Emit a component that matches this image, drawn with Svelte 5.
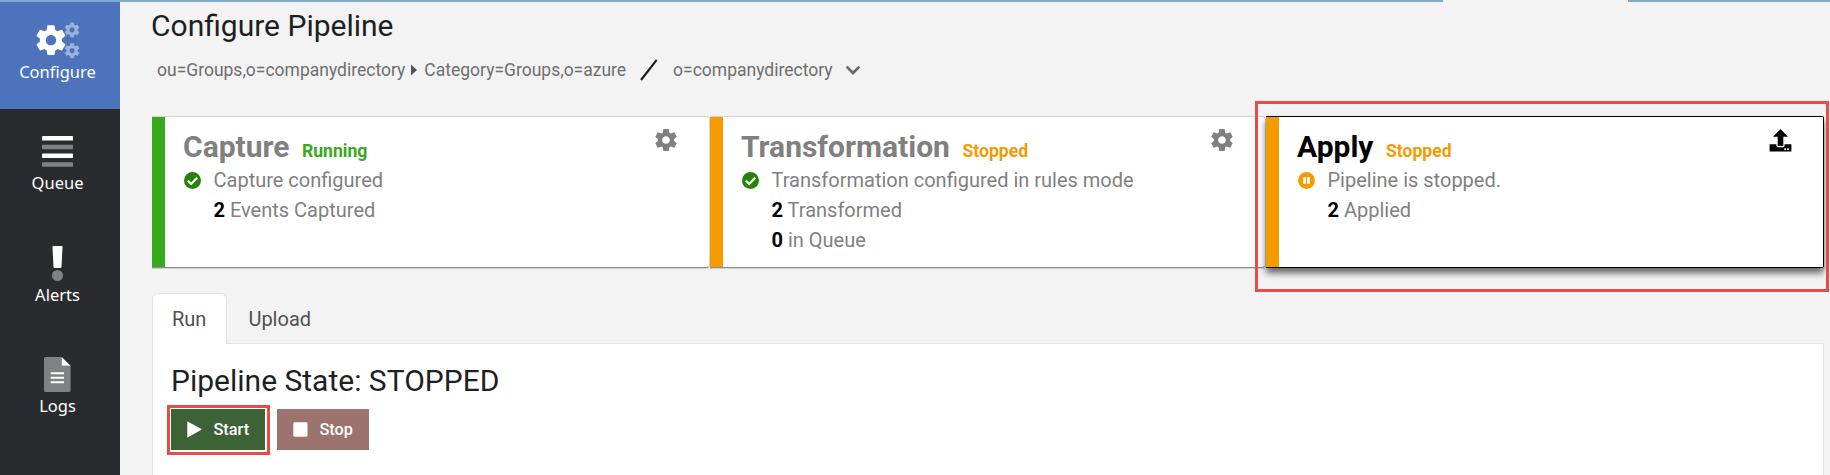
<script>
  const nav = [
    { id: 'configure', label: 'Configure', active: true },
    { id: 'queue', label: 'Queue' },
    { id: 'alerts', label: 'Alerts' },
    { id: 'logs', label: 'Logs' }
  ];
  const stages = [
    { name: 'Capture', status: 'Running', tone: 'green', icon: 'check', message: 'Capture configured', counts: [[2, 'Events Captured']] },
    { name: 'Transformation', status: 'Stopped', tone: 'orange', icon: 'check', message: 'Transformation configured in rules mode', counts: [[2, 'Transformed'], [0, 'in Queue']] },
    { name: 'Apply', status: 'Stopped', tone: 'orange', icon: 'pause', message: 'Pipeline is stopped.', counts: [[2, 'Applied']], selected: true }
  ];
  const gear = 'M19.43 12.98c.04-.32.07-.64.07-.98s-.03-.66-.07-.98l2.11-1.65c.19-.15.24-.42.12-.64l-2-3.46c-.12-.22-.39-.3-.61-.22l-2.49 1c-.52-.4-1.08-.73-1.69-.98l-.38-2.65C14.46 2.18 14.25 2 14 2h-4c-.25 0-.46.18-.49.42l-.38 2.65c-.61.25-1.17.59-1.69.98l-2.49-1c-.23-.09-.49 0-.61.22l-2 3.46c-.13.22-.07.49.12.64l2.11 1.65c-.04.32-.07.65-.07.98s.03.66.07.98l-2.11 1.65c-.19.15-.24.42-.12.64l2 3.46c.12.22.39.3.61.22l2.49-1c.52.4 1.08.73 1.69.98l.38 2.65c.03.24.24.42.49.42h4c.25 0 .46-.18.49-.42l.38-2.65c.61-.25 1.17-.59 1.69-.98l2.49 1c.23.09.49 0 .61-.22l2-3.46c.12-.22.07-.49-.12-.64l-2.11-1.65zM12 15.5c-1.93 0-3.5-1.57-3.5-3.5s1.57-3.5 3.5-3.5 3.5 1.57 3.5 3.5-1.57 3.5-3.5 3.5z';
</script>

<div class="app">
  <div class="topline"><span></span><span></span></div>
  <div class="body">
    <nav class="side">
      {#each nav as item (item.id)}
        <a class="item {item.id}" class:active={item.active}>
          {#if item.id === 'configure'}
            <svg width="44" height="36" viewBox="0 0 44 36">
              <g transform="translate(-2.8 .4) scale(1.48)"><path fill="#fff" d={gear} /></g>
              <g transform="translate(27.2 -1) scale(.74)" opacity=".45"><path fill="#fff" d={gear} /></g>
              <g transform="translate(27.2 19.7) scale(.74)" opacity=".45"><path fill="#fff" d={gear} /></g>
            </svg>
          {:else if item.id === 'queue'}
            <svg width="31" height="31" viewBox="0 0 31 31">
              <rect y="0" width="31" height="4.6" rx=".7" fill="#fff" />
              <rect y="8.8" width="31" height="4.4" rx=".7" fill="#808184" />
              <rect y="17.5" width="31" height="4.5" rx=".7" fill="#fff" />
              <rect y="26.2" width="31" height="4.6" rx=".7" fill="#808184" />
            </svg>
          {:else if item.id === 'alerts'}
            <svg width="11" height="35" viewBox="0 0 11 35">
              <path d="M1 0H10Q10.6 0 10.5.8L9.5 21Q9.4 22 8.5 22H2.5Q1.6 22 1.5 21L.5.8Q.4 0 1 0Z" fill="#fff" />
              <circle cx="5.5" cy="29.5" r="5.5" fill="#808184" />
            </svg>
          {:else}
            <svg width="27" height="35" viewBox="0 0 27 35">
              <path d="M1.5 0H17.7V8.7H26.6V33.5Q26.6 35 25 35H1.5Q0 35 0 33.5V1.5Q0 0 1.5 0Z" fill="#808184" />
              <path d="M17.7 0L26.6 8.7H17.7Z" fill="#fff" />
              <path d="M6.7 16.2H20M6.7 20.8H20M6.7 25.3H20" stroke="#fff" stroke-width="2.1" />
            </svg>
          {/if}
          <span>{item.label}</span>
        </a>
      {/each}
    </nav>

    <main>
      <h1>Configure Pipeline</h1>
      <div class="crumbs">
        <span>ou=Groups,o=companydirectory</span>
        <svg class="caret" width="6" height="12" viewBox="0 0 6 12"><path d="M0 .5L6 6L0 11.5Z" fill="#555" /></svg>
        <span>Category=Groups,o=azure</span>
        <svg class="slash" width="18" height="22" viewBox="0 0 18 22"><path d="M1 21L16.7 .8" stroke="#1c1c1c" stroke-width="2.1" /></svg>
        <span>o=companydirectory</span>
        <svg class="chev" width="16" height="11" viewBox="0 0 16 11"><path d="M1.6 1.6L8 8L14.4 1.6" fill="none" stroke="#6a6a6a" stroke-width="2.7" /></svg>
      </div>

      <div class="stages">
        {#each stages as s (s.name)}
          <section class="card {s.tone}" class:selected={s.selected}>
            <div class="info">
              <h2>{s.name} <small>{s.status}</small></h2>
              <div class="line">
                <svg width="17" height="17" viewBox="0 0 17 17">
                  {#if s.icon === 'check'}
                    <circle cx="8.5" cy="8.5" r="8.5" fill="#25820b" />
                    <path d="M3.9 8.7L7.2 11.9L13.2 5.8" fill="none" stroke="#fff" stroke-width="2.2" />
                  {:else}
                    <circle cx="8.5" cy="8.5" r="8.4" fill="#f49b00" />
                    <path d="M5.2 5.2H8V11.7H5.2ZM9 5.2H11.8V11.7H9Z" fill="#fff" />
                  {/if}
                </svg>
                <span>{s.message}</span>
              </div>
              {#each s.counts as [n, text]}
                <div class="line count"><span><b>{n}</b> {text}</span></div>
              {/each}
            </div>
            {#if s.selected}
              <svg class="tool up" width="23" height="23" viewBox="0 0 23 23">
                <path d="M11.5 0L19 7.7H14.3V17H8.7V7.7H4Z" fill="#000" />
                <path d="M.6 15.3H7.4V16.5Q7.4 18.3 9.2 18.3H13.8Q15.6 18.3 15.6 16.5V15.3H22.4V22.5H.6Z" fill="#000" />
                <path d="M15.3 19.3H17V21H15.3ZM18.2 19.3H19.9V21H18.2Z" fill="#fff" />
              </svg>
            {:else}
              <svg class="tool" width="22" height="22" viewBox="2 2 20 20"><path d={gear} fill="#808080" /></svg>
            {/if}
          </section>
        {/each}
        <div class="mark stage-mark"></div>
      </div>

      <div class="tabs">
        <div class="tab on">Run</div>
        <div class="tab">Upload</div>
      </div>
      <div class="panel">
        <h3>Pipeline State: STOPPED</h3>
        <div class="buttons">
          <button class="start">
            <svg width="15" height="17" viewBox="0 0 15 17"><path d="M1 .7L14 7.7Q15 8.3 14 8.9L1 16.3Q.3 16.6 .3 15.8V1.2Q.3.3 1 .7Z" fill="#fff" /></svg>
            Start
            <i class="mark"></i>
          </button>
          <button class="stop">
            <svg width="15" height="15" viewBox="0 0 15 15"><rect x=".3" y=".3" width="14.2" height="14.4" rx="1.4" fill="#fff" /></svg>
            Stop
          </button>
        </div>
      </div>
    </main>
  </div>
</div>

<style>
  :global(body) { margin: 0; background: #f3f3f3; overflow: hidden; }
  .app { width: 1830px; height: 475px; overflow: hidden; display: flex; flex-direction: column; background: #f3f3f3; font-family: Roboto, sans-serif; }
  .topline { display: flex; justify-content: space-between; height: 2px; flex: none; }
  .topline span { width: 1443px; background: #7faccc; }
  .topline span:last-child { width: 202px; }
  .body { display: flex; flex: 1; min-height: 0; }
  svg { display: block; flex: none; }

  .side { width: 120px; flex: none; background: #2a2b2f; }
  .item { display: flex; flex-direction: column; align-items: center; box-sizing: border-box; height: 111.5px; color: #fff; font: 16.5px/24px "Noto Sans", sans-serif; }
  .item span { margin-top: auto; }
  .item svg { position: relative; left: -2.5px; }
  .item span { position: relative; left: -2.5px; }
  .item.configure { height: 107px; padding: 20px 0 25px; background: #4d73bd; }
  .item.queue { height: 113px; padding: 27px 0 27px; }
  .item.alerts { padding: 24px 0 27px; }
  .item.logs { padding: 23.5px 0 27px; }

  main { flex: 1; padding: 0 6px 0 32px; display: flex; flex-direction: column; min-width: 0; }
  h1, h3 { margin: 0; font-weight: 400; font-size: 30px; line-height: 36px; color: #1d1f22; }
  h1 { margin: 6px 0 0 -1px; }
  .crumbs { display: flex; align-items: center; height: 26px; margin: 13px 0 0 5px; font-size: 17.5px; color: #6e6e6e; }
  .caret { margin: 0 7px 0 6px; }
  .slash { margin: 0 15px 0 14px; }
  .chev { margin: 0 0 0 12px; }

  .stages { position: relative; display: grid; grid-template-columns: 558px 556px 1fr; margin-top: 33px; height: 152px; flex: none; }
  .card { display: flex; justify-content: space-between; box-sizing: border-box; background: #fff; color: #808080; border: solid #d6d6d6; border-width: 1px 1px 1px 0; border-bottom-color: #8d8d8d; border-radius: 0 4px 4px 0; box-shadow: 0 1px 1px rgba(0,0,0,.15); }
  .card::before { content: ''; width: 13px; flex: none; background: #37a91c; }
  .orange::before { background: #f49b00; }
  .card.selected { border-color: #000; border-radius: 0 2px 2px 0; box-shadow: 0 5px 7px rgba(0,0,0,.6); }
  .info { flex: 1; padding: 12px 0 0 18.5px; }
  h2 { margin: 0 0 -4px -.5px; display: flex; align-items: baseline; gap: 12.5px; font-size: 30px; line-height: 36px; font-weight: 700; }
  .selected h2 { color: #000; }
  small { font-size: 17.6px; color: #37a91c; }
  .orange small { color: #f49b00; }
  .line { display: flex; align-items: center; gap: 13px; height: 30px; font-size: 20px; }
  .count { padding-left: 30px; }
  b { color: #000; }
  .tool { margin: 12px 32px 0 0; }
  .tool.up { margin: 12px 31px 0 0; }

  .mark { position: absolute; box-sizing: border-box; border: 3px solid #e94b47; }
  .stage-mark { left: 1103px; top: -15px; width: 574px; height: 191px; }

  .tabs { display: flex; margin: 25px 0 0 -.5px; height: 50px; flex: none; font-size: 20px; color: #4e5053; }
  .tab { box-sizing: border-box; height: 51px; padding: 1px 21px 0; line-height: 51px; }
  .tab.on { border: 1px solid #dee2e6; border-bottom: 0; border-radius: 6px 6px 0 0; background: #fff; z-index: 1; padding: 0 20px 0 19.5px; }
  .panel { flex: 1; border: 1px solid #dee2e6; border-bottom: 0; background: #fff; padding: 19px 19px 0 18px; }
  .buttons { display: flex; gap: 12px; margin-top: 10px; }
  button { position: relative; display: flex; align-items: center; gap: 12px; height: 41px; border: 0; padding: 0 15.5px; color: #fff; font: 500 16.3px Roboto, sans-serif; }
  .start { width: 94px; background: #3d6235; }
  .stop { width: 92px; background: #9d746d; }
  .start .mark { left: -4px; top: -4px; width: 103px; height: 50px; }
</style>
